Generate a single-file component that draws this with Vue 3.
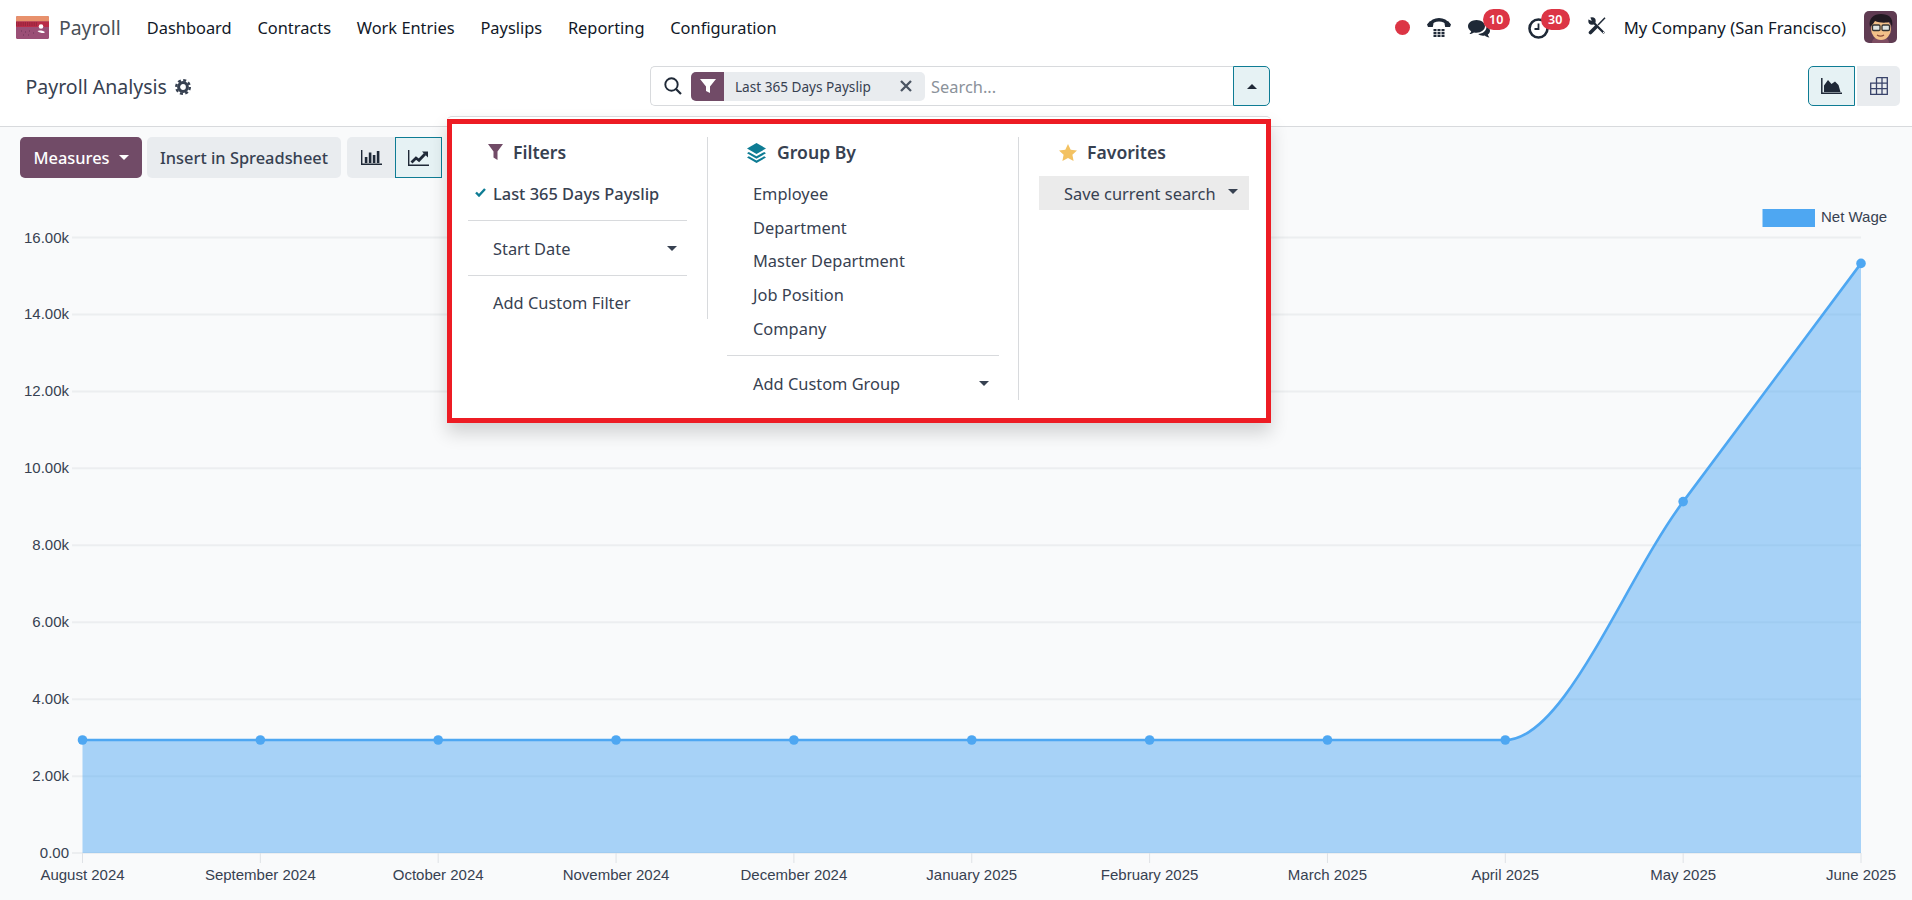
<script setup>
const navItems = ['Dashboard', 'Contracts', 'Work Entries', 'Payslips', 'Reporting', 'Configuration']
const groupItems = ['Employee', 'Department', 'Master Department', 'Job Position', 'Company']
const stepX = 177.85
const months = ['August 2024', 'September 2024', 'October 2024', 'November 2024', 'December 2024', 'January 2025', 'February 2025', 'March 2025', 'April 2025', 'May 2025', 'June 2025']
const ys = [740, 740, 740, 740, 740, 740, 740, 740, 740, 501.6, 263.4]
const points = months.map((label, i) => ({ label, x: 82.5 + i * stepX, y: ys[i] }))
const yTicks = ['16.00k', '14.00k', '12.00k', '10.00k', '8.00k', '6.00k', '4.00k', '2.00k', '0.00'].map((label, i) => ({ label, y: 237.5 + i * 76.95 }))
const lineD = 'M82.5 740 L1505.3 740 C1564.6 740 1623.9 581 1683.2 501.6 L1861 263.4'
const areaD = lineD + ' L1861 853 L82.5 853 Z'
</script>

<template>
  <div class="page">
    <header class="navbar">
      <svg class="logo" viewBox="0 0 33 23" width="33" height="23">
        <rect width="33" height="23" rx="1.500" fill="#9b4f76" />
        <path d="M0 1.500A1.500 1.500 0 0 1 1.500 0h30A1.500 1.500 0 0 1 33 1.500V5.500H0z" fill="#e8916c" />
        <rect y="5.500" width="33" height="5.500" fill="#b92c48" />
        <path d="M0 7h22M0 9h21" stroke="#7a1f35" stroke-width="1" stroke-dasharray="1.200 1" />
        <circle cx="25" cy="10.500" r="2.300" fill="#fff" />
        <path d="M21.500 15c1-1 5-.8 7 .8v1.200c-3 .2-5.500-.5-7-2z" fill="#fff" />
        <path d="M5 15h1M9 16h1M13 15h1M7 19h1M12 19h1M17 17h1" stroke="#6d3557" stroke-width="1" />
      </svg>
      <span class="brand">Payroll</span>
      <nav class="menu">
        <a v-for="item in navItems" :key="item" class="menu-item">{{ item }}</a>
      </nav>
      <div class="systray">
        <span class="rec"></span>
        <svg class="ico phone" viewBox="0 0 24 19" width="24" height="19">
          <path d="M2.500 7C5 3 8.500 1.800 12 1.800S19 3 21.500 7" fill="none" stroke="#1f2937" stroke-width="3.400" />
          <path d="M0 6.500 1 9h4.800L6.500 5.500 3 3zM24 6.500 23 9h-4.800l-.7-3.500L21 3z" fill="#1f2937" />
          <g fill="#1f2937">
            <rect x="6.500" y="11" width="3" height="2.200" /><rect x="10.500" y="11" width="3" height="2.200" /><rect x="14.500" y="11" width="3" height="2.200" />
            <rect x="6.500" y="14" width="3" height="2.200" /><rect x="10.500" y="14" width="3" height="2.200" /><rect x="14.500" y="14" width="3" height="2.200" />
            <rect x="6.500" y="16.800" width="3" height="2.200" /><rect x="10.500" y="16.800" width="3" height="2.200" /><rect x="14.500" y="16.800" width="3" height="2.200" />
          </g>
        </svg>
        <span class="with-badge chat">
          <svg viewBox="0 0 23 18" width="23" height="18" fill="#1f2937">
            <path d="M8.500 0C3.800 0 0 2.800 0 6.300c0 2 1.300 3.800 3.200 5-.2 1-.9 2-1.700 2.700 1.800 0 3.400-.8 4.500-1.600.8.200 1.700.3 2.500.3 4.700 0 8.500-2.900 8.500-6.400S13.200 0 8.500 0z" />
            <path d="M18.500 6.800c0 4-3.700 7-8.300 7.300 1.200 1 3 1.600 4.800 1.600.6 0 1.200-.1 1.800-.2 1 .9 2.500 1.900 4.700 2-.8-.7-1.500-1.900-1.700-2.900 1.500-1 2.200-2.300 2.200-3.800 0-1.800-1.300-3.300-3-4.100z" />
          </svg>
          <b class="badge b10">10</b>
        </span>
        <span class="with-badge clock">
          <svg viewBox="0 0 21 21" width="21" height="21" fill="none" stroke="#1f2937">
            <circle cx="10.500" cy="10.500" r="9" stroke-width="2.600" />
            <path d="M10.500 5.500v5.500H6.500" stroke-width="1.800" />
          </svg>
          <b class="badge b30">30</b>
        </span>
        <svg class="ico tools" viewBox="0 0 18 18" width="18" height="18">
          <path d="M17 .8 10 8" stroke="#1f2937" stroke-width="1.500" fill="none" />
          <path d="M8 10 2.500 15.500" stroke="#1f2937" stroke-width="3.600" stroke-linecap="round" fill="none" />
          <path d="M5.500 5.500 15.500 15.500" stroke="#1f2937" stroke-width="2.300" stroke-linecap="round" fill="none" />
          <circle cx="4" cy="4" r="3.700" fill="#1f2937" />
          <path d="M-1 1.800 3.800 4 1.800-1z" fill="#fff" />
          <circle cx="15.500" cy="15.500" r=".7" fill="#fff" />
        </svg>
        <span class="company">My Company (San Francisco)</span>
        <svg class="avatar" viewBox="0 0 33 32" width="33" height="32">
          <rect width="33" height="32" rx="5" fill="#5f3b52" />
          <path d="M8 32c0-4 3-6 8.500-6S25 28 25 32z" fill="#7e4d62" />
          <ellipse cx="17" cy="18" rx="10" ry="11" fill="#f2c089" />
          <path d="M6 16C4 7 10 3 17 3s13 3 11 13l-2-5c-4 1-11 1-15-1l-2 3z" fill="#221a22" />
          <rect x="8.500" y="14" width="7.500" height="5.500" rx="1.200" fill="#dfe4e2" stroke="#333" stroke-width="1.300" />
          <rect x="18" y="14" width="7.500" height="5.500" rx="1.200" fill="#dfe4e2" stroke="#333" stroke-width="1.300" />
          <path d="M13 24c2 1.300 5 1.300 7 0" stroke="#8a4a3a" stroke-width="1.300" fill="none" />
        </svg>
      </div>
    </header>

    <section class="control-panel">
      <div class="title-wrap">
        <span class="title">Payroll Analysis</span>
        <svg class="gear" viewBox="0 0 16 16" width="16" height="16">
          <circle cx="8" cy="8" r="4.400" fill="none" stroke="#374151" stroke-width="3" />
          <circle cx="8" cy="8" r="6.800" fill="none" stroke="#374151" stroke-width="2.400" stroke-dasharray="3 2.340" />
        </svg>
      </div>
      <div class="search-group">
        <div class="search-box">
          <svg class="search-ico" viewBox="0 0 20 20" width="20" height="20" fill="none" stroke="#1f2937" stroke-width="1.900">
            <circle cx="8.500" cy="8.500" r="6.200" /><path d="M13 13l5 5" stroke-width="2.200" />
          </svg>
          <div class="facet">
            <span class="facet-icon">
              <svg viewBox="0 0 16 16" width="16" height="16" fill="#fff"><path d="M0 1h16L10 8.500V15L6 13V8.500z" /></svg>
            </span>
            <span class="facet-value">Last 365 Days Payslip</span>
            <svg class="facet-x" viewBox="0 0 12 12" width="12" height="12" stroke="#4b5563" stroke-width="2.300"><path d="M1 1l10 10M11 1L1 11" /></svg>
          </div>
          <span class="placeholder">Search...</span>
        </div>
        <button class="toggle"><i class="caret-up"></i></button>

        <div class="dropdown">
          <div class="marked">
            <div class="col col-filters">
              <div class="col-title">
                <svg class="t-ico" viewBox="0 0 15 16" width="15" height="16" fill="#714b67"><path d="M0 0h15L9.500 7.500V16L5.500 13.500V7.500z" /></svg>
                <span class="t-filters">Filters</span>
              </div>
              <div class="item active">
                <svg class="check" viewBox="0 0 11 9" width="11" height="9" fill="none" stroke="#0e7c94" stroke-width="2.400"><path d="M1 4.500l3 3L10 1" /></svg>
                Last 365 Days Payslip
              </div>
              <div class="sep"></div>
              <div class="item row">Start Date<i class="caret c-start"></i></div>
              <div class="sep sep-last"></div>
              <div class="item row">Add Custom Filter</div>
            </div>
            <div class="col col-group">
              <div class="col-title">
                <svg class="t-ico" viewBox="0 0 19 20" width="19" height="20" fill="#0e7c94">
                  <path d="M9.500 0 19 5.500 9.500 11 0 5.500z" />
                  <path d="M1.800 9 9.500 13.300 17.200 9 19 10.300 9.500 15.700 0 10.300z" />
                  <path d="M1.800 13.300 9.500 17.600 17.200 13.300 19 14.600 9.500 20 0 14.600z" />
                </svg>
                <span class="t-group">Group By</span>
              </div>
              <div v-for="g in groupItems" :key="g" class="item group-item">{{ g }}</div>
              <div class="sep sep-group"></div>
              <div class="item group-item group-custom">Add Custom Group<i class="caret c-group"></i></div>
            </div>
            <div class="col col-fav">
              <div class="col-title">
                <svg class="t-ico" viewBox="0 0 18 17" width="18" height="17" fill="#f3c262"><path d="M9 0l2.700 5.700 6.300.7-4.600 4.300 1.200 6.300L9 14l-5.600 3 1.200-6.300L0 6.400l6.300-.7z" /></svg>
                <span class="t-fav">Favorites</span>
              </div>
              <div class="save">Save current search<i class="caret c-save"></i></div>
            </div>
          </div>
        </div>
      </div>
      <div class="view-switch">
        <button class="vbtn vbtn-graph">
          <svg viewBox="0 0 21 16" width="21" height="16">
            <path d="M.8 0v15.200H21" fill="none" stroke="#1f2937" stroke-width="1.500" />
            <path d="M3 14V7.500L7 2l3.500 4L14 3.500l3.500 3.500L19.500 14z" fill="#1f2937" />
          </svg>
        </button>
        <button class="vbtn vbtn-pivot">
          <svg viewBox="0 0 18 18" width="18" height="18" fill="none" stroke="#39436a" stroke-width="1.300">
            <path d="M6.500.7h10.800v16.600H.7V6.200h16.600M6.500.7v16.600M12 .7v16.600M.7 11.700h16.600" />
          </svg>
        </button>
      </div>
    </section>

    <main class="content">
      <div class="toolbar">
        <button class="btn btn-primary">Measures<i class="caret caret-white"></i></button>
        <button class="btn btn-secondary">Insert in Spreadsheet</button>
        <div class="chart-modes">
          <button class="mode">
            <svg viewBox="0 0 21 15" width="21" height="15" fill="#1f2937">
              <path d="M.7 0v14.300H21" fill="none" stroke="#1f2937" stroke-width="1.400" />
              <rect x="3.800" y="7" width="2.600" height="6" /><rect x="7.800" y="2.500" width="2.600" height="10.500" /><rect x="11.800" y="5" width="2.600" height="8" /><rect x="15.800" y="1" width="2.600" height="12" />
            </svg>
          </button>
          <button class="mode mode-on">
            <svg viewBox="0 0 21 16" width="21" height="16" fill="none" stroke="#1f2937">
              <path d="M.7 0v15.300H21" stroke-width="1.400" />
              <path d="M3.500 12.500l4.500-4.500 3 2.300L17 4" stroke-width="2.800" />
              <path d="M14 1.500h6v6z" fill="#1f2937" stroke="none" />
            </svg>
          </button>
        </div>
      </div>
      <svg class="chart" viewBox="0 178 1912 722" width="1912" height="722">
        <g stroke="#eceef0" stroke-width="2">
          <line v-for="t in yTicks" :key="t.label" x1="72" :y1="t.y" x2="1861" :y2="t.y" />
        </g>
        <g stroke="#dfe2e6" stroke-width="1">
          <line v-for="p in points" :key="p.label" :x1="p.x" y1="853" :x2="p.x" y2="863" />
        </g>
        <path :d="areaD" fill="#4ea7f2" fill-opacity="0.48" />
        <path :d="lineD" fill="none" stroke="#4ea7f2" stroke-width="2.600" />
        <circle v-for="p in points" :key="'c' + p.label" :cx="p.x" :cy="p.y" r="4.800" fill="#4ea7f2" />
        <g class="axis">
          <text v-for="t in yTicks" :key="'y' + t.label" x="69" :y="t.y + 5" text-anchor="end">{{ t.label }}</text>
          <text v-for="p in points" :key="'x' + p.label" :x="p.x" y="880" text-anchor="middle">{{ p.label }}</text>
        </g>
        <rect x="1762.500" y="209" width="52.500" height="18" fill="#4ea7f2" />
        <text class="axis" x="1821" y="222">Net Wage</text>
      </svg>
    </main>
  </div>
</template>

<style scoped>
.page {
  width: 1912px;
  height: 900px;
  overflow: hidden;
  background: #fff;
  font-family: "Noto Sans", sans-serif;
  font-size: 16.400px;
  color: #374151;
  display: flex;
  flex-direction: column;
}
i { display: inline-block; }
button { font: inherit; color: inherit; cursor: pointer; }

.navbar {
  height: 56px;
  flex: none;
  display: flex;
  align-items: center;
  padding-left: 16px;
}
.logo { margin-bottom: 1px; }
.brand { margin-left: 10px; margin-bottom: 2px; font-size: 19.400px; color: #495057; }
.menu { display: flex; margin-left: 13px; margin-bottom: 2px; }
.menu-item { padding: 0 12.900px; color: #111827; }
.systray { margin-left: auto; display: flex; align-items: center; padding-right: 15px; }
.rec { width: 15px; height: 15px; border-radius: 50%; background: #dc3545; margin-right: 17px; margin-bottom: 2px; }
.phone { margin-right: 17px; margin-bottom: 1px; }
.with-badge { position: relative; display: flex; }
.chat { width: 23px; margin-right: 37px; }
.clock { width: 21px; margin-right: 39px; }
.badge {
  position: absolute;
  top: -9px;
  height: 21px;
  line-height: 21px;
  border-radius: 11px;
  background: #dc3545;
  color: #fff;
  text-align: center;
  font-size: 12.500px;
  font-weight: 600;
}
.b10 { left: 15px; width: 27px; }
.b30 { left: 13px; width: 29px; }
.chat svg { margin-top: 2px; }
.tools { margin-right: 18px; margin-bottom: 4px; }
.company { color: #111827; white-space: nowrap; font-size: 16.600px; margin-bottom: 2px; }
.avatar { margin-left: 18px; margin-bottom: 2px; }

.control-panel {
  height: 71px;
  flex: none;
  box-sizing: border-box;
  border-bottom: 1px solid #d8dadd;
  display: flex;
  padding: 10px 12px 0 25.500px;
  align-items: flex-start;
}
.title-wrap { width: 624.500px; height: 40px; display: flex; align-items: center; }
.title { font-size: 19.500px; color: #374151; }
.gear { margin-left: 8px; margin-top: 2px; }
.search-group { position: relative; display: flex; z-index: 5; }
.search-box {
  width: 583px;
  height: 40px;
  box-sizing: border-box;
  border: 1px solid #d8dadd;
  border-right: none;
  border-radius: 5px 0 0 5px;
  display: flex;
  align-items: center;
  padding-left: 12px;
}
.search-ico { flex: none; }
.facet { display: flex; align-items: center; height: 29px; margin-left: 8px; background: #e9ecef; border-radius: 5px; width: 234px; position: relative; }
.facet-icon { width: 33px; height: 29px; background: #714b67; border-radius: 5px 0 0 5px; display: flex; align-items: center; justify-content: center; }
.facet-value { margin-left: 11px; font-size: 13.600px; white-space: nowrap; }
.facet-x { position: absolute; right: 13px; top: 8px; }
.placeholder { margin-left: 6px; color: #8b929a; }
.toggle {
  width: 37px;
  height: 40px;
  box-sizing: border-box;
  border: 1px solid #0e7c94;
  border-radius: 0 5px 5px 0;
  background: #e6f2f4;
  display: flex;
  align-items: center;
  justify-content: center;
  padding: 0;
}
.caret-up { border-left: 5px solid transparent; border-right: 5px solid transparent; border-bottom: 5px solid #1f2937; }
.caret { border-left: 5px solid transparent; border-right: 5px solid transparent; border-top: 5px solid #374151; }

.dropdown {
  position: absolute;
  top: 50px;
  left: -203px;
  width: 824px;
  height: 307px;
  box-sizing: border-box;
  padding-top: 2px;
  border-top: 1px solid #d8dadd;
  background: #fff;
  border-radius: 5px 5px 0 0;
  box-shadow: 0 10px 18px rgba(0, 0, 0, 0.16);
}
.marked {
  box-sizing: border-box;
  height: 304px;
  border: 5px solid #ed1c24;
  background: #fff;
  display: flex;
  align-items: flex-start;
  padding-top: 13px;
}
.col { box-sizing: border-box; border-right: 1px solid #d8dadd; flex: none; }
.col-filters { width: 256px; height: 182px; padding: 0 20px 0 16px; }
.col-group { width: 311px; height: 263px; padding: 0 19px 0 19px; }
.col-fav { width: 247px; border-right: none; padding: 0 17px 0 20px; }
.col-title { height: 32px; display: flex; align-items: center; font-weight: 600; font-size: 17.600px; color: #374151; position: relative; }
.col-title span { margin-bottom: 2px; }
.t-ico { position: absolute; top: 7px; left: 20px; }
.col-filters .t-filters { margin-left: 45px; }
.col-group .t-group { margin-left: 50px; }
.col-group .t-ico { left: 20px; top: 6px; }
.col-fav .t-fav { margin-left: 48px; }
.item { height: 34px; display: flex; align-items: center; position: relative; }
.row { padding-left: 25px; }
.active { padding-left: 25px; font-weight: 500; margin-top: 7px; color: #374151; }
.check { position: absolute; left: 7px; top: 12px; }
.sep { height: 1px; background: #d8dadd; margin: 10px 0 10.500px; }
.sep-last { margin: 9px 0 9.500px; }
.c-start { position: absolute; right: 10px; top: 14px; }
.col-group .col-title + .item { margin-top: 7.500px; }
.group-item { height: 33.750px; padding-left: 26px; }
.sep-group { margin: 9.500px 0 11px; }
.group-custom { height: 34px; }
.c-group { position: absolute; right: 10px; top: 14px; }
.save {
  margin-top: 7px;
  height: 34px;
  display: flex;
  align-items: center;
  padding-left: 25px;
  background: #ebebeb;
  position: relative;
}
.c-save { position: absolute; right: 11px; top: 13px; }

.view-switch { margin-left: auto; display: flex; gap: 2px; }
.vbtn { height: 40px; box-sizing: border-box; border-radius: 5px; display: flex; align-items: center; justify-content: center; padding: 0; }
.vbtn-graph { width: 47px; background: #e6f2f4; border: 1px solid #0e7c94; border-radius: 5px 0 0 5px; }
.vbtn-pivot { width: 43px; background: #e9ecef; border: none; border-radius: 0 5px 5px 0; }

.content { flex: 1; background: #f9fafb; display: flex; flex-direction: column; }
.toolbar { height: 51px; flex: none; box-sizing: border-box; padding: 10px 0 0 20px; display: flex; align-items: flex-start; }
.btn { height: 41px; border: none; border-radius: 5px; padding: 0; display: flex; align-items: center; justify-content: center; font-weight: 500; }
.btn-primary { width: 122px; background: #714b67; color: #fff; }
.caret-white { border-top-color: #fff; margin-left: 9px; }
.btn-secondary { width: 194px; margin-left: 5px; background: #e9ecef; color: #374151; }
.chart-modes { display: flex; margin-left: 6px; background: #e9ecef; border-radius: 5px 0 0 5px; }
.mode { width: 48px; height: 41px; border: none; background: transparent; padding: 0; display: flex; align-items: center; justify-content: center; }
.mode-on { width: 47px; background: #e6f2f4; border: 1px solid #0e7c94; box-sizing: border-box; }
.chart { display: block; flex: none; }
.axis text, text.axis { font-family: "Liberation Sans", sans-serif; font-size: 15px; fill: #374151; }
</style>
